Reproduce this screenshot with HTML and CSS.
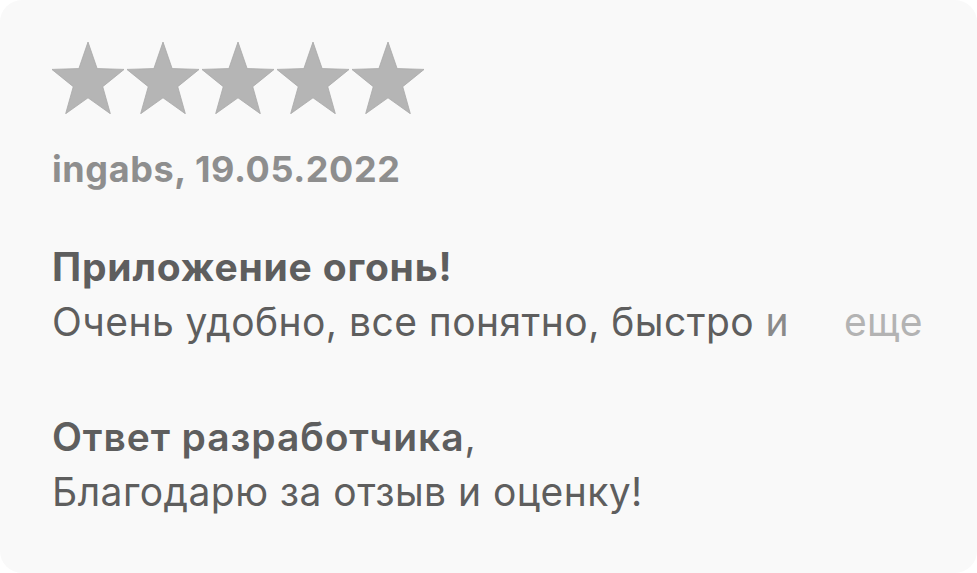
FILE: index.html
```html
<!DOCTYPE html>
<html lang="ru">
<head>
<meta charset="utf-8">
<link rel="stylesheet" href="styles.css">
</head>
<body>
<div class="card">
  <div class="stars">
    <svg class="star" viewBox="0 0 72 69" preserveAspectRatio="none"><polygon points="36,0 45.11,25.46 72.14,26.26 50.74,42.79 58.34,68.74 36,53.5 13.66,68.74 21.26,42.79 -0.14,26.26 26.89,25.46"/></svg>
    <svg class="star" viewBox="0 0 72 69" preserveAspectRatio="none"><polygon points="36,0 45.11,25.46 72.14,26.26 50.74,42.79 58.34,68.74 36,53.5 13.66,68.74 21.26,42.79 -0.14,26.26 26.89,25.46"/></svg>
    <svg class="star" viewBox="0 0 72 69" preserveAspectRatio="none"><polygon points="36,0 45.11,25.46 72.14,26.26 50.74,42.79 58.34,68.74 36,53.5 13.66,68.74 21.26,42.79 -0.14,26.26 26.89,25.46"/></svg>
    <svg class="star" viewBox="0 0 72 69" preserveAspectRatio="none"><polygon points="36,0 45.11,25.46 72.14,26.26 50.74,42.79 58.34,68.74 36,53.5 13.66,68.74 21.26,42.79 -0.14,26.26 26.89,25.46"/></svg>
    <svg class="star" viewBox="0 0 72 69" preserveAspectRatio="none"><polygon points="36,0 45.11,25.46 72.14,26.26 50.74,42.79 58.34,68.74 36,53.5 13.66,68.74 21.26,42.79 -0.14,26.26 26.89,25.46"/></svg>
  </div>
  <div class="author">ingabs, 19.05.2022</div>
  <div class="title">Приложение огонь!</div>
  <div class="body-row">
    <span class="body-text">Очень удобно, все понятно, быстро <span class="fade">и</span></span>
    <span class="more">еще</span>
  </div>
  <div class="reply-title"><b>Ответ разработчика</b>,</div>
  <div class="reply-text">Благодарю за отзыв и оценку!</div>
</div>
</body>
</html>
```
FILE: styles.css
```css
html, body {
  margin: 0;
  padding: 0;
  background: #ffffff;
}
.card {
  box-sizing: border-box;
  width: 977px;
  height: 573px;
  background: #f9f9f9;
  border-radius: 22px;
  padding: 42px 54px 0 52px;
  font-family: Inter, Roboto, "Liberation Sans", sans-serif;
  font-size: 39px;
  letter-spacing: 0.45px;
  line-height: 55px;
  color: #5e5e5e;
}
.stars {
  display: flex;
  gap: 3px;
  height: 72px;
}
.star {
  width: 72px;
  height: 72px;
  fill: #b5b5b5;
  stroke: #a9a9a9;
  stroke-width: 0.8;
}
.author {
  margin-top: 28px;
  font-size: 36px;
  letter-spacing: 0.6px;
  font-weight: 700;
  color: #8e8e8e;
}
.title {
  margin-top: 42px;
  font-weight: 700;
  letter-spacing: 0.8px;
}
.body-row {
  display: flex;
  justify-content: space-between;
}
.fade {
  color: #8a8a8a;
}
.more {
  color: #b3b3b3;
}
.reply-title {
  margin-top: 60px;
  letter-spacing: 0.9px;
}
.reply-title b {
  font-weight: 600;
}
```
